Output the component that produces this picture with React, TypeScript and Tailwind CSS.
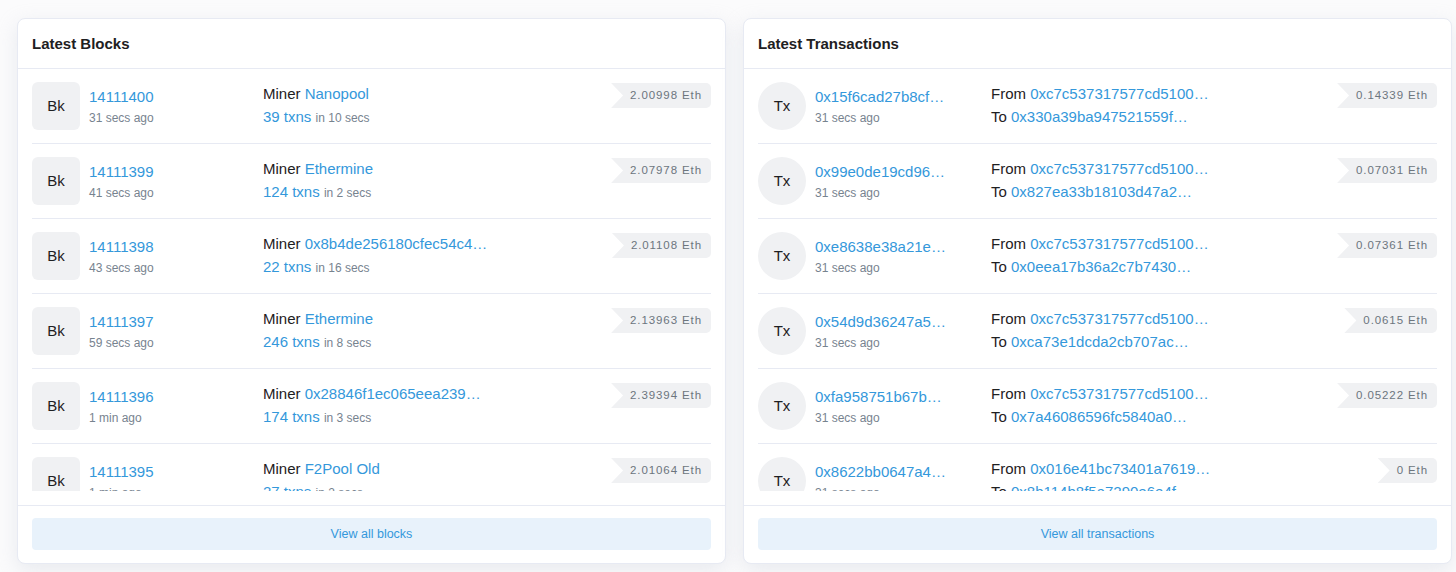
type Block = { num: string; ago: string; miner: string; txns: string; secs: string; reward: string }
type Tx = { hash: string; ago: string; from: string; to: string; value: string }

const blocks: Block[] = [
  { num: '14111400', ago: '31 secs ago', miner: 'Nanopool', txns: '39 txns', secs: 'in 10 secs', reward: '2.00998 Eth' },
  { num: '14111399', ago: '41 secs ago', miner: 'Ethermine', txns: '124 txns', secs: 'in 2 secs', reward: '2.07978 Eth' },
  { num: '14111398', ago: '43 secs ago', miner: '0x8b4de256180cfec54c4…', txns: '22 txns', secs: 'in 16 secs', reward: '2.01108 Eth' },
  { num: '14111397', ago: '59 secs ago', miner: 'Ethermine', txns: '246 txns', secs: 'in 8 secs', reward: '2.13963 Eth' },
  { num: '14111396', ago: '1 min ago', miner: '0x28846f1ec065eea239…', txns: '174 txns', secs: 'in 3 secs', reward: '2.39394 Eth' },
  { num: '14111395', ago: '1 min ago', miner: 'F2Pool Old', txns: '27 txns', secs: 'in 2 secs', reward: '2.01064 Eth' },
]

const txs: Tx[] = [
  { hash: '0x15f6cad27b8cf…', ago: '31 secs ago', from: '0xc7c537317577cd5100…', to: '0x330a39ba947521559f…', value: '0.14339 Eth' },
  { hash: '0x99e0de19cd96…', ago: '31 secs ago', from: '0xc7c537317577cd5100…', to: '0x827ea33b18103d47a2…', value: '0.07031 Eth' },
  { hash: '0xe8638e38a21e…', ago: '31 secs ago', from: '0xc7c537317577cd5100…', to: '0x0eea17b36a2c7b7430…', value: '0.07361 Eth' },
  { hash: '0x54d9d36247a5…', ago: '31 secs ago', from: '0xc7c537317577cd5100…', to: '0xca73e1dcda2cb707ac…', value: '0.0615 Eth' },
  { hash: '0xfa958751b67b…', ago: '31 secs ago', from: '0xc7c537317577cd5100…', to: '0x7a46086596fc5840a0…', value: '0.05222 Eth' },
  { hash: '0x8622bb0647a4…', ago: '31 secs ago', from: '0x016e41bc73401a7619…', to: '0x8b114b8f5a7290e6e4f…', value: '0 Eth' },
]

function Badge({ value }: { value: string }) {
  return (
    <div className="mt-px flex h-[25px] shrink-0 items-center self-start rounded-r-[5px] bg-[#f0f1f3] pl-[19px] pr-[9px] text-[11.5px] tracking-[0.9px] text-[#6c757e] [clip-path:polygon(0_0,100%_0,100%_100%,0_100%,12px_50%)]">
      {value}
    </div>
  )
}

function Card({ title, footer, children }: { title: string; footer: string; children: React.ReactNode }) {
  return (
    <div className="w-[709px] shrink-0 rounded-lg border border-[#e7eaf3] bg-white shadow-[0_6px_20px_rgba(189,197,209,0.3)]">
      <div className="flex h-[50px] items-center border-b border-[#e7eaf3] px-[14px] pt-px">
        <h2 className="text-[15px] font-bold text-[#1e2022]">{title}</h2>
      </div>
      <div className="px-[14px] pb-[14px]">
        <div className="h-[422px] overflow-hidden">{children}</div>
      </div>
      <div className="border-t border-[#e7eaf3] px-[14px] pb-[13px] pt-[12px]">
        <div className="flex h-[32px] items-center justify-center rounded-[4px] bg-[#e8f2fb] text-[12.5px] text-[#3498db]">
          {footer}
        </div>
      </div>
    </div>
  )
}

export default function App() {
  return (
    <div className="flex min-h-screen items-start gap-[17px] bg-[#fbfbfc] pl-[17px] pt-[18px] font-['Liberation_Sans',Arial,sans-serif]">
      <Card title="Latest Blocks" footer="View all blocks">
        {blocks.map((b) => (
          <div key={b.num} className="flex border-b border-[#e7eaf3] py-[13px]">
            <div className="flex w-[231px] shrink-0 items-center">
              <div className="flex h-[48px] w-[48px] items-center justify-center rounded-md bg-[#f0f1f3] text-[15px] text-[#1e2022]">
                Bk
              </div>
              <div className="ml-[9px] pt-px">
                <div className="text-[15px] leading-[22px] text-[#3498db]">{b.num}</div>
                <div className="text-[12px] leading-[20px] text-[#77838f]">{b.ago}</div>
              </div>
            </div>
            <div className="flex-1">
              <div className="text-[15px] leading-[23px] text-[#1e2022]">
                Miner <span className="text-[#3498db]">{b.miner}</span>
              </div>
              <div className="text-[15px] leading-[24px] text-[#3498db]">
                {b.txns} <span className="text-[12px] text-[#77838f]">{b.secs}</span>
              </div>
            </div>
            <Badge value={b.reward} />
          </div>
        ))}
      </Card>
      <Card title="Latest Transactions" footer="View all transactions">
        {txs.map((t) => (
          <div key={t.hash} className="flex border-b border-[#e7eaf3] py-[13px]">
            <div className="flex w-[233px] shrink-0 items-center">
              <div className="flex h-[48px] w-[48px] items-center justify-center rounded-full bg-[#f0f1f3] text-[15px] text-[#1e2022]">
                Tx
              </div>
              <div className="ml-[9px] pt-px">
                <div className="text-[15px] leading-[22px] text-[#3498db]">{t.hash}</div>
                <div className="text-[12px] leading-[20px] text-[#77838f]">{t.ago}</div>
              </div>
            </div>
            <div className="flex-1">
              <div className="text-[15px] leading-[23px] text-[#1e2022]">
                From <span className="text-[#3498db]">{t.from}</span>
              </div>
              <div className="text-[15px] leading-[24px] text-[#1e2022]">
                To <span className="text-[#3498db]">{t.to}</span>
              </div>
            </div>
            <Badge value={t.value} />
          </div>
        ))}
      </Card>
    </div>
  )
}
